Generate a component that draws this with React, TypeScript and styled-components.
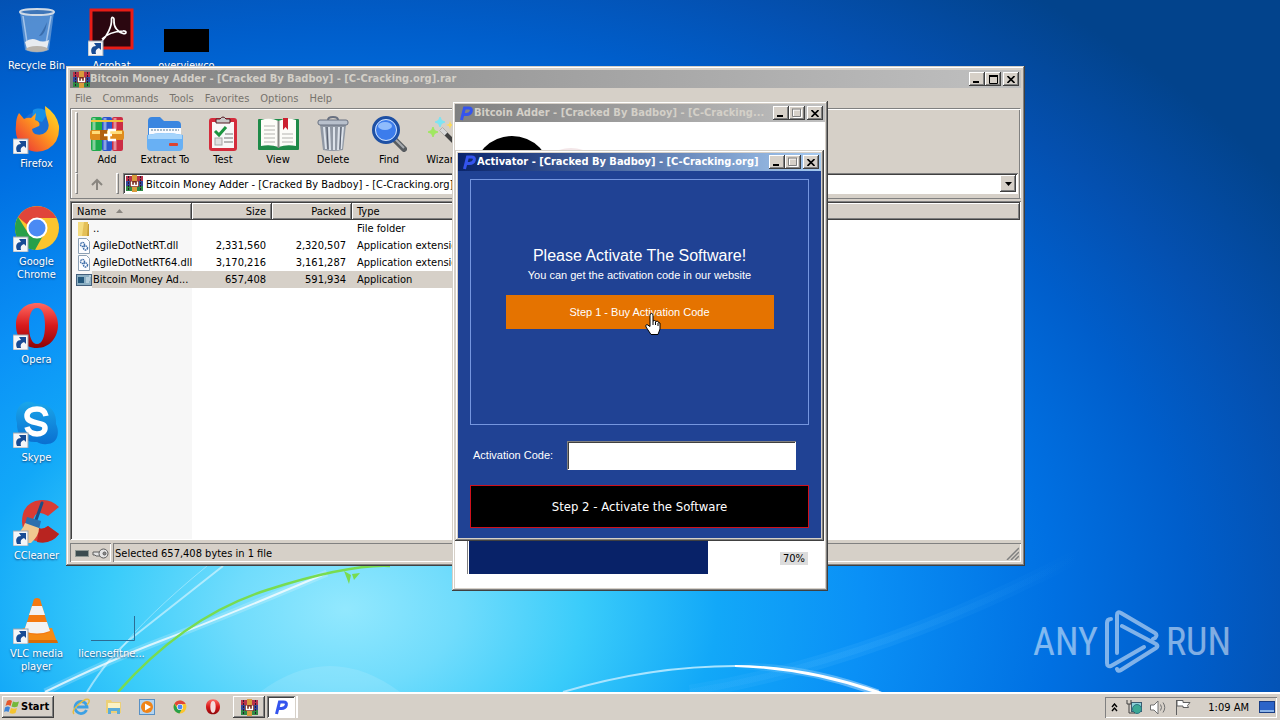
import React from 'react';
import styled, { createGlobalStyle, css } from 'styled-components';

const face = '#d6d0c8';
const ui = '"DejaVu Sans Condensed", "DejaVu Sans", sans-serif';
const formFont = '"Liberation Sans", Arial, sans-serif';

const GlobalStyle = createGlobalStyle`
  *, *::before, *::after { box-sizing: border-box; }
  body { margin: 0; overflow: hidden; font: 11px/13px ${ui}; color: #000; }
  button, input, select { font: inherit; color: inherit; border-radius: 0; }
  svg { display: block; flex: none; }
`;

const raised = css`
  box-shadow: inset -1px -1px #404040, inset 1px 1px #fff, inset -2px -2px #808080;
`;
const sunken = css`
  box-shadow: inset 1px 1px #808080, inset -1px -1px #fff, inset 2px 2px #404040;
`;
const thinSunken = css`
  box-shadow: inset 1px 1px #808080, inset -1px -1px #fff;
`;

const Screen = styled.div`
  display: flex;
  flex-direction: column;
  height: 100vh;
`;

const Desktop = styled.main`
  position: relative;
  flex: 1;
  min-height: 0;
  overflow: hidden;
  background: radial-gradient(88% 112% at 27% 88%, #92e8fe 0%, #70dcfc 10%, #3accfa 21%, #12a8f8 33%, #0a90f6 46%, #0070e2 63%, #005ecb 75%, #0450b0 86%, #02438c 100%);
`;

const Wallpaper = styled.svg`
  position: absolute;
  inset: 0;
  width: 100%;
  height: 100%;
`;

const IconGrid = styled.div`
  position: relative;
  display: grid;
  grid-template-columns: repeat(3, 75px);
  grid-auto-rows: 98px;
  width: max-content;
  padding-top: 8px;
  margin-left: -1px;
`;

const Shortcut = styled.a<{ $col: number; $row: number }>`
  grid-column: ${(p) => p.$col};
  grid-row: ${(p) => p.$row};
  display: flex;
  flex-direction: column;
  align-items: center;
  gap: 3px;
  overflow: hidden;
  color: #fff;
  text-align: center;
  text-decoration: none;
  text-shadow: 0 1px 2px #123a70;
`;

const ShortcutLabel = styled.span`
  max-width: 70px;
`;

const Window = styled.section`
  position: absolute;
  display: flex;
  flex-direction: column;
  padding: 4px;
  background: ${face};
  box-shadow: inset -1px -1px #404040, inset 1px 1px #d4d0c8, inset -2px -2px #808080, inset 2px 2px #fff;
`;

const ArchiverWindow = styled(Window)`
  left: 66px;
  right: 255px;
  top: 66px;
  bottom: 126px;
`;

const AdderWindow = styled(Window)`
  left: 452px;
  top: 101px;
  width: 376px;
  height: 490px;
  padding: 3px;
`;

const ActivatorWindow = styled(Window)`
  left: 455px;
  top: 150px;
  width: 369px;
  padding: 3px;
`;

const TitleBar = styled.header<{ $active?: boolean }>`
  display: flex;
  align-items: center;
  flex: none;
  height: 18px;
  padding: 0 2px 0 3px;
  color: ${(p) => (p.$active ? '#fff' : '#d4d0c8')};
  background: ${(p) => (p.$active ? 'linear-gradient(90deg, #0a246a, #a6caf0)' : 'linear-gradient(90deg, #808080, #c0c0c0)')};
`;

const Title = styled.h1`
  flex: 1;
  min-width: 0;
  margin: 0;
  overflow: hidden;
  font: bold 11px/14px ${ui};
  white-space: nowrap;
`;

const CaptionButton = styled.button`
  display: grid;
  place-items: center;
  width: 16px;
  height: 14px;
  padding: 0;
  border: 0;
  background: ${face};
  ${raised}
  & + &:last-child { margin-left: 2px; }
`;

const MenuBar = styled.nav`
  display: flex;
  flex: none;
  gap: 11px;
  height: 20px;
  padding: 4px 5px;
  color: #77736d;
`;

const MenuLink = styled.a`
  color: inherit;
  text-decoration: none;
`;

const Bars = styled.div`
  flex: none;
  border: 1px solid #808080;
  border-right-color: #fff;
  box-shadow: inset 1px 1px #fff, inset -1px 0 #808080;
  padding: 3px 2px 4px 4px;
`;

const Tools = styled.div`
  display: flex;
  height: 61px;
  overflow: hidden;
`;

const Grip = styled.span`
  flex: none;
  width: 3px;
  border: 1px solid #fff;
  border-right-color: #808080;
  border-bottom-color: #808080;
`;

const ToolButton = styled.button<{ $w: number }>`
  display: flex;
  flex: none;
  flex-direction: column;
  align-items: center;
  gap: 1px;
  width: ${(p) => p.$w}px;
  padding: 4px 0 0;
  border: 0;
  background: none;
  white-space: nowrap;
`;

const AddressRow = styled.div`
  display: flex;
  gap: 1px;
  height: 21px;
`;

const UpButton = styled.button`
  display: grid;
  place-items: center;
  width: 36px;
  padding: 0;
  border: 0;
  background: none;
`;

const Combo = styled.label`
  display: flex;
  flex: 1;
  align-items: center;
  min-width: 0;
  margin-left: 3px;
  padding: 2px 2px 2px 3px;
  background: #fff;
  ${sunken}
`;

const ComboSelect = styled.select`
  flex: 1;
  min-width: 0;
  padding: 1px 0 0 3px;
  border: 0;
  background: none;
  appearance: none;
`;

const ComboArrow = styled.span`
  display: grid;
  place-items: center;
  align-self: stretch;
  width: 16px;
  background: ${face};
  ${raised}
`;

const FileList = styled.div`
  flex: 1;
  min-height: 0;
  margin-top: 2px;
  padding: 2px 1px 1px 2px;
  overflow: hidden;
  background: linear-gradient(90deg, #f7f7f7 122px, #fff 122px);
  ${sunken}
`;

const Table = styled.table`
  width: 100%;
  table-layout: fixed;
  border-collapse: collapse;
  white-space: nowrap;
`;

const HeadCell = styled.th<{ $w?: number; $right?: boolean }>`
  width: ${(p) => (p.$w ? `${p.$w}px` : 'auto')};
  height: 17px;
  padding: 0 6px 0 5px;
  font-weight: normal;
  text-align: ${(p) => (p.$right ? 'right' : 'left')};
  background: ${face};
  ${raised}
`;

const SortMark = styled.svg`
  display: inline-block;
  margin: 0 0 2px 10px;
`;

const Cell = styled.td<{ $right?: boolean; $selected?: boolean }>`
  height: 17px;
  padding: 0 6px 0 5px;
  text-align: ${(p) => (p.$right ? 'right' : 'left')};
  background: ${(p) => (p.$selected ? face : 'none')};
`;

const NameCell = styled.td`
  height: 17px;
  padding: 0 0 0 4px;
`;

const FileName = styled.span<{ $selected?: boolean }>`
  display: flex;
  align-items: center;
  height: 17px;
  & > span {
    flex: 1;
    padding-left: 1px;
    line-height: 17px;
    background: ${(p) => (p.$selected ? face : 'none')};
  }
`;

const StatusBar = styled.footer`
  display: flex;
  flex: none;
  gap: 2px;
  height: 22px;
  padding-top: 3px;
`;

const StatusPane = styled.div<{ $grow?: boolean }>`
  display: flex;
  flex: ${(p) => (p.$grow ? 1 : 'none')};
  align-items: center;
  justify-content: space-between;
  gap: 3px;
  padding: 2px 2px 0 ${(p) => (p.$grow ? 2 : 5)}px;
  ${thinSunken}
`;

const AdderBody = styled.div`
  display: flex;
  flex: 1;
  flex-direction: column;
  justify-content: space-between;
  padding: 14px 17px 14px 12px;
  background: #fff;
`;

const ProgressRow = styled.div`
  display: flex;
  align-items: center;
  justify-content: space-between;
`;

const Track = styled.div`
  width: 246px;
  height: 40px;
  padding-left: 1px;
  border-left: 1px solid #808080;
`;

const Fill = styled.div`
  width: 98%;
  height: 100%;
  background: #082268;
`;

const Percent = styled.output`
  margin-top: 8px;
  padding: 0 3px;
  background: #dcdcdc;
`;

const ActivatorBody = styled.form`
  display: flex;
  flex-direction: column;
  padding: 8px 12px 10px;
  background: #204294;
  color: #fff;
  font-family: ${formFont};
`;

const Offer = styled.div`
  display: flex;
  flex-direction: column;
  align-items: center;
  height: 246px;
  padding-top: 66px;
  border: 1px solid #7596df;
`;

const OfferTitle = styled.h2`
  margin: 0;
  font: 16px/20px ${formFont};
`;

const OfferText = styled.p`
  margin: 3px 0 13px;
`;

const BuyButton = styled.button`
  width: 268px;
  height: 34px;
  border: 0;
  background: #e57300;
`;

const CodeRow = styled.div`
  display: flex;
  align-items: center;
  justify-content: space-between;
  padding: 16px 13px 15px 3px;
`;

const CodeInput = styled.input`
  width: 229px;
  height: 29px;
  padding: 0 6px;
  border: 0;
  background: #fff;
  color: #000;
  ${sunken}
`;

const ActivateButton = styled.button`
  height: 43px;
  border: 1px solid #d0101c;
  background: #000;
  font: 13px/16px ${ui};
`;

const Pointer = styled.svg`
  position: absolute;
  left: 645px;
  top: 313px;
`;

const Watermark = styled.div`
  position: absolute;
  right: 49px;
  bottom: 18px;
  display: flex;
  align-items: center;
  gap: 6px;
  color: #fff;
  opacity: 0.5;
  font: 400 38px/64px "Roboto Condensed", Lato, sans-serif;
`;

const Taskbar = styled.footer`
  display: flex;
  flex: none;
  align-items: center;
  height: 28px;
  padding: 2px 3px 0 2px;
  background: ${face};
  box-shadow: inset 0 2px #fff;
`;

const StartButton = styled.button`
  display: flex;
  align-items: center;
  gap: 1px;
  width: 52px;
  height: 22px;
  margin-right: 10px;
  padding: 0 3px 0 2px;
  border: 0;
  background: ${face};
  font: bold 11px/14px ${ui};
  ${raised}
`;

const QuickLaunch = styled.nav`
  display: flex;
  margin-right: 4px;
`;

const QuickLink = styled.a`
  display: grid;
  place-items: center;
  width: 33px;
`;

const TaskButton = styled.button<{ $pressed?: boolean }>`
  display: grid;
  place-items: center;
  width: ${(p) => (p.$pressed ? 28 : 32)}px;
  height: 22px;
  margin-right: 2px;
  padding: 0;
  border: 0;
  background: ${(p) => (p.$pressed ? '#fff' : face)};
  ${(p) => (p.$pressed ? sunken : raised)}
`;

const Divider = styled.span`
  width: 2px;
  height: 22px;
  margin-left: -1px;
  background: #fff;
`;

const Tray = styled.div`
  display: flex;
  align-items: center;
  gap: 8px;
  height: 21px;
  margin-left: auto;
  padding: 0 2px 0 6px;
  ${thinSunken}
`;

const Clock = styled.time`
  margin: 0 2px 0 9px;
`;

/* ---------- drawings ---------- */

const Badge = () => (
  <g>
    <rect x="0" y="33" width="15" height="15" fill="#f4f6f8" stroke="#9aa4b0" strokeWidth="1" />
    <path d="M4 46c-2-5 0-8 4-8l-2-3h7v7l-2-2c-3 1-4 3-3 6z" fill="#174b94" />
  </g>
);

const BinIcon = () => (
  <svg width="48" height="48" viewBox="0 0 48 48">
    <path d="M7 4h34l-5 38q-12 5-24 0z" fill="#6fa0d8" fillOpacity=".75" />
    <path d="M10 8l5 33M38 8l-6 33" stroke="#c8dcf4" strokeOpacity=".7" strokeWidth="1.500" />
    <path d="M34 14q-2 14-8 14 4-5 8-14z" fill="#2f5f9c" fillOpacity=".7" />
    <path d="M12 34q6-5 12-2t12 0l-2 9q-10 4-20 0z" fill="#e8ecf0" />
    <ellipse cx="24" cy="41" rx="11" ry="3" fill="#b9b4ac" />
    <ellipse cx="24" cy="4" rx="17" ry="3" fill="#3f76b8" stroke="#d0dae6" strokeWidth="2" />
  </svg>
);

const AcrobatIcon = () => (
  <svg width="48" height="48" viewBox="0 0 48 48">
    <rect x="3" y="2" width="41" height="38" fill="#2b0710" stroke="#e81c16" strokeWidth="3" />
    <path d="M14 33c5-5 10-15 9.500-21-.5-4 3-3 2.500 1-.5 6 4 11 9 12.500 4 1 4-3 0-2.500-8 .5-16 3-21 8" fill="none" stroke="#fff" strokeWidth="1.700" />
    <Badge />
  </svg>
);

const BlackIcon = () => (
  <svg width="48" height="48" viewBox="0 0 48 48">
    <rect x="1" y="21" width="45" height="23" fill="#000" />
  </svg>
);

const FirefoxIcon = () => (
  <svg width="48" height="48" viewBox="0 0 48 48">
    <defs>
      <linearGradient id="fx" x1="1" y1="0" x2="0" y2="1">
        <stop offset="0" stopColor="#ffe226" />
        <stop offset=".45" stopColor="#ff9a1e" />
        <stop offset="1" stopColor="#e8233c" />
      </linearGradient>
    </defs>
    <circle cx="25" cy="23" r="17" fill="#1b6fd6" />
    <path d="M20 4c6-3 12-1 15 3l-6 9-10-3z" fill="#1690e8" />
    <path d="M6 7l5 6q4-2 7-1l5-5-1 7q6 2 4 6l-7 3q0 3 3 5 7 2 11-2 4-4 2-10-3-9-3-16 12 8 14 20 1 16-11 23-12 6-23-1Q1 34 3 19q0-7 3-12z" fill="url(#fx)" />
    <Badge />
  </svg>
);

const chromeShapes = (
  <>
    <circle cx="24" cy="24" r="22" fill="#fbc52e" />
    <path d="M5 13A22 22 0 0 1 43.500 14H24a10 10 0 0 0-9.500 7z" fill="#e0453a" />
    <path d="M5 13a22 22 0 0 0 17 33l10-18a10 10 0 0 1-17 1z" fill="#27a04a" />
    <circle cx="24" cy="24" r="10.500" fill="#fff" />
    <circle cx="24" cy="24" r="8.500" fill="#4a8af4" />
  </>
);

const ChromeIcon = () => (
  <svg width="48" height="48" viewBox="0 0 48 48">
    {chromeShapes}
    <Badge />
  </svg>
);

const operaShapes = (
  <>
    <defs>
      <linearGradient id="op" x1="0" y1="0" x2="0" y2="1">
        <stop offset="0" stopColor="#ff6a62" />
        <stop offset=".5" stopColor="#d81a1c" />
        <stop offset="1" stopColor="#8c0408" />
      </linearGradient>
    </defs>
    <path fillRule="evenodd" d="M24 1c13 0 21 10 21 22S37 46 24 46 3 36 3 23 11 1 24 1zm0 5c-5 0-8 6-8 17.500S19 42 24 42s8-7 8-18.500S29 6 24 6z" fill="url(#op)" />
  </>
);

const OperaIcon = () => (
  <svg width="48" height="48" viewBox="0 0 48 48">
    {operaShapes}
    <Badge />
  </svg>
);

const SkypeIcon = () => (
  <svg width="48" height="48" viewBox="0 0 48 48">
    <defs>
      <linearGradient id="sk" x1="0" y1="0" x2="0" y2="1">
        <stop offset="0" stopColor="#1aa6ea" />
        <stop offset="1" stopColor="#0a6fd0" />
      </linearGradient>
    </defs>
    <path d="M13 2c5-1 8 1 10 2 14-1 21 8 20 20 4 8 2 20-9 20-4 1-8-1-10-2C11 43 3 34 4 23 1 14 5 4 13 2z" fill="url(#sk)" />
    <path d="M33 16c-1-5-4-7-9-7s-10 2-10 7c0 9 18 5 18 12 0 4-4 6-8 6-5 0-9-3-10-7" fill="none" stroke="#fff" strokeWidth="5.500" />
    <Badge />
  </svg>
);

const CCleanerIcon = () => (
  <svg width="48" height="48" viewBox="0 0 48 48">
    <path d="M46 9Q38 1 28 2 9 4 9 24q1 18 19 20 11 1 18-8l-11-8q-11 8-15-5 2-13 15-5z" fill="#d83c34" />
    <path d="M46 36l-11-8q-5 4-9 2l-2 14q14 3 22-8z" fill="#b82420" />
    <path d="M29 5l-6 17" stroke="#1c4f84" strokeWidth="3" strokeLinecap="round" />
    <path d="M14 19l14 4-2 8-14-5z" fill="#2c6fae" />
    <path d="M12 25l14 5q0 8-8 15H4l-3-8q8-3 11-12z" fill="#f0c890" />
    <Badge />
  </svg>
);

const VlcIcon = () => (
  <svg width="48" height="48" viewBox="0 0 48 48">
    <path d="M10 32h29l5 14H8z" fill="#f58a14" />
    <path d="M8 44h36l1 3H8z" fill="#d86c08" />
    <path d="M21 3q3-2 6 0l10 33q-13 6-26 0z" fill="#f47a10" />
    <path d="M19 10h10l3 9H16zM14 26h20l3 9q-13 5-26 0z" fill="#f2f2f2" />
    <Badge />
  </svg>
);

const BlankIcon = () => (
  <svg width="48" height="48" viewBox="0 0 48 48">
    <path d="M3 44.500h43.500V20" fill="none" stroke="#2c6c94" />
  </svg>
);

const RarIcon = () => (
  <svg width="17" height="17" viewBox="0 0 17 17">
    <rect x="0" y="1" width="17" height="5" fill="#b8324a" />
    <rect x="0" y="6" width="17" height="5" fill="#34489c" />
    <rect x="0" y="11" width="17" height="5" fill="#2e8a44" />
    <path d="M2.500 1v15M14.500 1v15" stroke="#2a1830" strokeDasharray="2 1" />
    <rect x="6" y="0" width="5" height="17" fill="#d89c3c" />
    <rect x="4" y="6" width="9" height="6" fill="#7a2c20" />
    <path d="M5.500 6.500v4h3v-3M8.500 10.500h3v-4" fill="none" stroke="#fff" strokeWidth="1.400" />
  </svg>
);

const PIcon = () => (
  <svg width="16" height="16" viewBox="0 0 16 16">
    <path d="M3.500 15L6.500 3h4q3.500 0 2.800 3.200-.8 3.300-4.800 3.300H5.500" fill="none" stroke="#3454ee" strokeWidth="3" />
  </svg>
);

const AddIcon = () => (
  <svg width="36" height="36" viewBox="0 0 36 36">
    <rect x="2" y="1" width="11" height="34" rx="2" fill="#1faa4c" />
    <rect x="13" y="1" width="10" height="34" rx="2" fill="#2a56cc" />
    <rect x="23" y="1" width="11" height="34" rx="2" fill="#cc2c44" />
    <path d="M5 2v32M16 2v32M26 2v32" stroke="#fff" strokeOpacity=".45" strokeWidth="3" />
    <path d="M2 5h11M13 5h10M23 5h11" stroke="#f0c43c" strokeWidth="2" />
    <rect x="1" y="14" width="34" height="10" rx="2" fill="#e08c1c" />
    <path d="M3 16.500h30" stroke="#ffdc78" strokeWidth="3" />
    <rect x="11" y="14" width="7" height="10" fill="#b06014" />
    <path d="M27 14h-7v10h7M15 19h8" stroke="#fff" strokeWidth="2.500" fill="none" />
  </svg>
);

const ExtractIcon = () => (
  <svg width="36" height="36" viewBox="0 0 36 36">
    <path d="M1 5q0-4 4-4h8l4 4h13q4 0 4 4v12H1z" fill="#3a86e0" />
    <path d="M2 12h32v10H2z" fill="#f8fbff" />
    <path d="M4 14h28" stroke="#a8bccc" strokeWidth="2" strokeDasharray="2 1" />
    <path d="M0 19q18-4 36 0v12q0 4-4 4H4q-4 0-4-4z" fill="#68b0f4" />
    <path d="M1 19q17-4 34 0v4H1z" fill="#a4d4fc" />
    <rect x="22" y="27" width="9" height="3" rx="1" fill="#dc4430" />
  </svg>
);

const TestIcon = () => (
  <svg width="36" height="36" viewBox="0 0 36 36">
    <rect x="4" y="2" width="28" height="33" rx="3" fill="#d42c3c" />
    <rect x="7" y="6" width="22" height="26" fill="#f8f8f8" />
    <path d="M11 7V3h4q3-4 6 0h4v4z" fill="#c8c8c8" stroke="#501820" />
    <path d="M10 15l4 4 7-8" fill="none" stroke="#1c9440" strokeWidth="3" />
    <path d="M20 18h8M19 22h9M19 26h9" stroke="#a0a0a0" strokeWidth="1.500" />
    <rect x="10" y="22" width="7" height="7" fill="#e0e0e0" stroke="#a8a8a8" />
  </svg>
);

const ViewIcon = () => (
  <svg width="43" height="36" viewBox="0 0 43 36">
    <rect x="1" y="3" width="41" height="31" rx="1" fill="#1e8a48" />
    <path d="M4 4q9-3 17.500 1Q30 1 39 4v26q-9-2-17.500 1Q13 28 4 30z" fill="#fcfcf8" />
    <path d="M21.500 5v27" stroke="#8c8c88" strokeWidth="2" />
    <path d="M7 10h11M7 14h11M7 18h11M7 22h11M7 26h11M25 18h11M25 22h11M25 26h11" stroke="#b4b4b0" />
    <path d="M26 2h5v12l-2.500-3-2.500 3z" fill="#cc2030" />
  </svg>
);

const DeleteIcon = () => (
  <svg width="36" height="36" viewBox="0 0 36 36">
    <path d="M5 9h26l-3 25q-10 2-20 0z" fill="#9098a4" />
    <path d="M9 11l2 22M14 11l1 23M19 11v23M24 11l-1 23M28 11l-2 22" stroke="#dce2ea" strokeWidth="2" />
    <path d="M12 11l1 22M26 11l-1 22" stroke="#586070" />
    <rect x="3" y="4" width="30" height="5" rx="2" fill="#b8c0cc" stroke="#687080" />
    <path d="M13 4q0-3 5-3t5 3" fill="none" stroke="#687080" strokeWidth="2" />
  </svg>
);

const FindIcon = () => (
  <svg width="36" height="36" viewBox="0 0 36 36">
    <path d="M24 24l9 9" stroke="#585c60" strokeWidth="6" strokeLinecap="round" />
    <path d="M24 23l9 9" stroke="#a8acb0" strokeWidth="2" />
    <circle cx="15" cy="14" r="12.500" fill="#3c7cec" stroke="#1e50a4" strokeWidth="3" />
    <circle cx="15" cy="14" r="10.500" fill="none" stroke="#d4e4f8" strokeWidth="1" />
    <ellipse cx="14" cy="10" rx="7" ry="4" fill="#90bcfc" />
  </svg>
);

const WizardIcon = () => (
  <svg width="36" height="36" viewBox="0 0 36 36">
    <path d="M16 13l18 18" stroke="#404040" strokeWidth="4" />
    <path d="M16 13l5 5" stroke="#d8d8d8" strokeWidth="4" />
    <path d="M15 1l1.500 3.500L20 6l-3.500 1.500L15 11l-1.500-3.500L10 6l3.500-1.500z" fill="#7ce4f4" stroke="#7ce4f4" />
    <path d="M8 11l1.500 3.500L13 16l-3.500 1.500L8 21l-1.500-3.500L3 16l3.500-1.500z" fill="#a0e860" stroke="#a0e860" />
    <path d="M25 5l1 3 3 1-3 1-1 3-1-3-3-1 3-1z" fill="#fcdc5c" />
  </svg>
);

const FolderIcon = () => (
  <svg width="16" height="16" viewBox="0 0 16 16">
    <path d="M2 1h6v14H2z" fill="#f4dc80" />
    <path d="M8 1h4v14H6z" fill="#e4c058" />
    <path d="M12 3h1v12h-2z" fill="#c49c38" />
  </svg>
);

const DllIcon = () => (
  <svg width="16" height="16" viewBox="0 0 16 16">
    <path d="M2.500.5h8l3 3v12h-11z" fill="#fcfdff" stroke="#8ca0b4" />
    <circle cx="6.500" cy="6.500" r="2" fill="none" stroke="#3c6ca8" strokeDasharray="1.500 .6" strokeWidth="1.500" />
    <circle cx="9.500" cy="10" r="2" fill="none" stroke="#3c6ca8" strokeDasharray="1.500 .6" strokeWidth="1.500" />
  </svg>
);

const ExeIcon = () => (
  <svg width="16" height="16" viewBox="0 0 16 16">
    <rect x=".5" y="2.500" width="15" height="11" fill="#8cb0c4" stroke="#44607c" />
    <rect x="2" y="5" width="6" height="6" fill="#24587c" />
    <path d="M10 6h4M10 8h4M10 10h3M13 4h2" stroke="#dcecf4" />
  </svg>
);

const PlayMark = () => (
  <svg width="56" height="64" viewBox="0 0 56 64" fill="none" stroke="currentColor" strokeWidth="4" strokeLinejoin="round" strokeLinecap="round">
    <path d="M7 9q-4 0-4 4v40q0 4 4 3l33-19" />
    <path d="M13 43V5q0-4 4-2l34 20q3 2 0 5l-2 1" />
    <path d="M18 16l34 18q3 2 0 4L17 60q-3 2-4-1" />
  </svg>
);

const CloseGlyph = () => (
  <svg width="8" height="7"><path d="M.5 0l7 7M7.500 0l-7 7" stroke="#000" strokeWidth="1.600" /></svg>
);

const Captions = ({ fixedSize }: { fixedSize?: boolean }) => (
  <>
    <CaptionButton aria-label="Minimize">
      <svg width="8" height="8"><path d="M0 7h6" stroke="#000" strokeWidth="2" /></svg>
    </CaptionButton>
    <CaptionButton aria-label="Maximize" disabled={fixedSize}>
      {fixedSize ? (
        <svg width="10" height="10"><path d="M1.500 2v7.500h8V2M1 2h9" fill="none" stroke="#fff" /><path d="M.5 1v7.500h8V1M0 1h9" fill="none" stroke="#808080" /></svg>
      ) : (
        <svg width="9" height="9"><path d="M.5 1v7.500h8V1" fill="none" stroke="#000" /><path d="M0 1h9" stroke="#000" strokeWidth="2" /></svg>
      )}
    </CaptionButton>
    <CaptionButton aria-label="Close">
      <CloseGlyph />
    </CaptionButton>
  </>
);

/* ---------- data ---------- */

const shortcuts = [
  { label: 'Recycle Bin', Icon: BinIcon, col: 1, row: 1 },
  { label: 'Firefox', Icon: FirefoxIcon, col: 1, row: 2 },
  { label: 'Google Chrome', Icon: ChromeIcon, col: 1, row: 3 },
  { label: 'Opera', Icon: OperaIcon, col: 1, row: 4 },
  { label: 'Skype', Icon: SkypeIcon, col: 1, row: 5 },
  { label: 'CCleaner', Icon: CCleanerIcon, col: 1, row: 6 },
  { label: 'VLC media player', Icon: VlcIcon, col: 1, row: 7 },
  { label: 'Acrobat', Icon: AcrobatIcon, col: 2, row: 1 },
  { label: 'licensefitne...', Icon: BlankIcon, col: 2, row: 7 },
  { label: 'overviewco', Icon: BlackIcon, col: 3, row: 1 },
];

const tools = [
  { label: 'Add', Icon: AddIcon, w: 58 },
  { label: 'Extract To', Icon: ExtractIcon, w: 58 },
  { label: 'Test', Icon: TestIcon, w: 58 },
  { label: 'View', Icon: ViewIcon, w: 52 },
  { label: 'Delete', Icon: DeleteIcon, w: 58 },
  { label: 'Find', Icon: FindIcon, w: 54 },
  { label: 'Wizard', Icon: WizardIcon, w: 54 },
];

const files = [
  { name: '..', size: '', packed: '', type: 'File folder', Icon: FolderIcon },
  { name: 'AgileDotNetRT.dll', size: '2,331,560', packed: '2,320,507', type: 'Application extension', Icon: DllIcon },
  { name: 'AgileDotNetRT64.dll', size: '3,170,216', packed: '3,161,287', type: 'Application extension', Icon: DllIcon },
  { name: 'Bitcoin Money Ad...', size: '657,408', packed: '591,934', type: 'Application', Icon: ExeIcon, selected: true },
];

const archive = 'Bitcoin Money Adder - [Cracked By Badboy] - [C-Cracking.org].rar';

export default function App() {
  return (
    <Screen>
      <GlobalStyle />
      <Desktop>
        <Wallpaper viewBox="0 0 1280 692" preserveAspectRatio="none" aria-hidden="true" fill="none">
          <defs>
            <linearGradient id="flare" gradientUnits="userSpaceOnUse" x1="735" y1="0" x2="880" y2="0">
              <stop offset="0" stopColor="#fff" stopOpacity="0" />
              <stop offset="1" stopColor="#fff" stopOpacity=".45" />
            </linearGradient>
            <linearGradient id="beam" gradientUnits="userSpaceOnUse" x1="690" y1="0" x2="1080" y2="0">
              <stop offset="0" stopColor="#5cc0ff" stopOpacity=".1" />
              <stop offset=".4" stopColor="#5cc0ff" stopOpacity=".14" />
              <stop offset="1" stopColor="#5cc0ff" stopOpacity="0" />
            </linearGradient>
          </defs>
          <path d="M260 692Q330 640 400 692z" fill="#fff" fillOpacity=".12" />
          <path d="M45 692Q110 660 163 640T327 573" stroke="#fff" strokeOpacity=".2" strokeWidth="7" />
          <path d="M45 692Q110 660 163 640T327 573" stroke="#fff" strokeOpacity=".75" strokeWidth="2" />
          <path d="M87 692Q110 655 133 637T223 566" stroke="#fff" strokeOpacity=".5" strokeWidth="2" />
          <path d="M120 650Q145 617 207 566" stroke="#fff" strokeOpacity=".35" />
          <path d="M118 692Q185 616 267 590T390 566" stroke="#78dc50" strokeWidth="2.500" />
          <path d="M344 571l5 13 2-9zM352 574l8-1-6 7z" fill="#78dc50" />
          <path d="M690 692Q880 660 1080 555" stroke="url(#beam)" strokeWidth="14" />
          <path d="M690 692Q880 660 1080 555" stroke="url(#beam)" strokeWidth="6" />
          <path d="M563 692Q650 666 736 666" stroke="#a8e4ff" strokeWidth="2" />
          <path d="M735 666Q805 666 878 693" stroke="url(#flare)" strokeWidth="7" />
          <path d="M735 665Q805 665 882 692h-10Q805 669 735 667z" fill="#fff" />
        </Wallpaper>

        <IconGrid>
          {shortcuts.map(({ label, Icon, col, row }) => (
            <Shortcut key={label} href="#" $col={col} $row={row}>
              <Icon />
              <ShortcutLabel>{label}</ShortcutLabel>
            </Shortcut>
          ))}
        </IconGrid>

        <Watermark>
          <span>ANY</span>
          <PlayMark />
          <span>RUN</span>
        </Watermark>

        <ArchiverWindow>
          <TitleBar>
            <RarIcon />
            <Title>{archive}</Title>
            <Captions />
          </TitleBar>
          <MenuBar>
            {['File', 'Commands', 'Tools', 'Favorites', 'Options', 'Help'].map((m) => (
              <MenuLink key={m} href="#">{m}</MenuLink>
            ))}
          </MenuBar>
          <Bars>
            <Tools>
              <Grip />
              {tools.map(({ label, Icon, w }) => (
                <ToolButton key={label} $w={w}>
                  <Icon />
                  {label}
                </ToolButton>
              ))}
            </Tools>
            <AddressRow>
              <Grip />
              <UpButton aria-label="Up one level">
                <svg width="12" height="12" fill="none" stroke="#8a8680" strokeWidth="2"><path d="M6 12V2M1 7l5-5 5 5" /></svg>
              </UpButton>
              <Grip />
              <Combo>
                <RarIcon />
                <ComboSelect aria-label="Archive path" defaultValue={archive}>
                  <option>{archive}</option>
                </ComboSelect>
                <ComboArrow>
                  <svg width="7" height="4"><path d="M0 0h7L3.500 4z" /></svg>
                </ComboArrow>
              </Combo>
            </AddressRow>
          </Bars>
          <FileList>
            <Table>
              <thead>
                <tr>
                  <HeadCell $w={120}>
                    Name
                    <SortMark width="7" height="4"><path d="M0 4h7L3.500 0z" fill="#8a8680" /></SortMark>
                  </HeadCell>
                  <HeadCell $w={80} $right>Size</HeadCell>
                  <HeadCell $w={80} $right>Packed</HeadCell>
                  <HeadCell $w={140}>Type</HeadCell>
                  <HeadCell />
                </tr>
              </thead>
              <tbody>
                {files.map(({ name, size, packed, type, Icon, selected }) => (
                  <tr key={name}>
                    <NameCell>
                      <FileName $selected={selected}>
                        <Icon />
                        <span>{name}</span>
                      </FileName>
                    </NameCell>
                    <Cell $right $selected={selected}>{size}</Cell>
                    <Cell $right $selected={selected}>{packed}</Cell>
                    <Cell $selected={selected}>{type}</Cell>
                  </tr>
                ))}
              </tbody>
            </Table>
          </FileList>
          <StatusBar>
            <StatusPane>
              <svg width="14" height="7"><rect x=".5" y=".5" width="13" height="6" fill="#3c4c50" stroke="#909894" /></svg>
              <svg width="17" height="11" fill="#e4e4e4" stroke="#5c5c5c"><path d="M9 4H1v3h2l1 1h5" /><circle cx="11.500" cy="5.500" r="4.500" /><circle cx="12.500" cy="5.500" r="1.500" fill="#888" /></svg>
            </StatusPane>
            <StatusPane $grow>
              Selected 657,408 bytes in 1 file
              <svg width="13" height="13" stroke="#808080"><path d="M1 13L13 1M5 13l8-8M9 13l4-4" strokeWidth="1.500" /></svg>
            </StatusPane>
          </StatusBar>
        </ArchiverWindow>

        <AdderWindow>
          <TitleBar>
            <PIcon />
            <Title>Bitcoin Adder - [Cracked By Badboy] - [C-Cracking...</Title>
            <Captions fixedSize />
          </TitleBar>
          <AdderBody>
            <svg width="120" height="78">
              <circle cx="45" cy="39" r="39" fill="#000" />
              <path d="M92 14q12-4 24 0z" fill="#f3e6e8" />
            </svg>
            <ProgressRow>
              <Track><Fill /></Track>
              <Percent>70%</Percent>
            </ProgressRow>
          </AdderBody>
        </AdderWindow>

        <ActivatorWindow>
          <TitleBar $active>
            <PIcon />
            <Title>Activator - [Cracked By Badboy] - [C-Cracking.org]</Title>
            <Captions fixedSize />
          </TitleBar>
          <ActivatorBody>
            <Offer>
              <OfferTitle>Please Activate The Software!</OfferTitle>
              <OfferText>You can get the activation code in our website</OfferText>
              <BuyButton type="button">Step 1 - Buy Activation Code</BuyButton>
            </Offer>
            <CodeRow>
              <label htmlFor="code">Activation Code:</label>
              <CodeInput id="code" type="text" />
            </CodeRow>
            <ActivateButton type="button">Step 2 - Activate the Software</ActivateButton>
          </ActivatorBody>
        </ActivatorWindow>

        <Pointer width="17" height="23" viewBox="0 0 17 23" aria-hidden="true">
          <path d="M5 2q0-1.500 1.500-1.500T8 2v6l1.500-.5 1.500 1 1.500-.5 1 1.500 1.500.5v6l-2 5.500H6L1 14q-1-2 1-2.500l3 2z" fill="#fff" stroke="#000" />
          <path d="M8 8v4M10.500 9v3M13 10v3" stroke="#000" />
        </Pointer>
      </Desktop>

      <Taskbar>
        <StartButton>
          <svg width="16" height="16" viewBox="0 0 16 16">
            <path d="M3 2q3-2 5 0L6.500 7Q4 5 1.500 7z" fill="#e4582c" />
            <path d="M9 2.500q3 1.500 6 0L13.500 7.500q-3 1.500-6 0z" fill="#74b83c" />
            <path d="M1 8.500q3-2 5 0L4.500 13Q2 11.500 0 13z" fill="#3c84d8" />
            <path d="M7 9q3 1.500 6 0l-1.500 5q-3 1.500-6 0z" fill="#f4c430" />
          </svg>
          Start
        </StartButton>
        <QuickLaunch>
          <QuickLink href="#" aria-label="Internet Explorer">
            <svg width="18" height="18" viewBox="0 0 18 18" fill="none">
              <path d="M14.500 12A6 6 0 1 1 15 9H5" stroke="#3ca0e4" strokeWidth="2.800" />
              <path d="M2 16Q-1 13 7 6t10-4q1 2-2 5" stroke="#e8bc3c" strokeWidth="1.400" />
            </svg>
          </QuickLink>
          <QuickLink href="#" aria-label="File Explorer">
            <svg width="18" height="16" viewBox="0 0 18 16">
              <path d="M1 1h5l1 2h9v11H1z" fill="#ecd078" />
              <path d="M3 4h12v5H3z" fill="#fbf2c4" />
              <path d="M3 15V9h12v6h-3v-3H6v3z" fill="#5cacd8" />
            </svg>
          </QuickLink>
          <QuickLink href="#" aria-label="Media Player">
            <svg width="16" height="16" viewBox="0 0 16 16">
              <rect x=".5" y=".5" width="15" height="15" fill="#b4d4f0" stroke="#5890c4" />
              <circle cx="8" cy="8" r="6" fill="#f08418" />
              <path d="M6 4.500v7L12 8z" fill="#fff" />
            </svg>
          </QuickLink>
          <QuickLink href="#" aria-label="Chrome">
            <svg width="14" height="14" viewBox="0 0 48 48">{chromeShapes}</svg>
          </QuickLink>
          <QuickLink href="#" aria-label="Opera">
            <svg width="16" height="16" viewBox="0 0 48 48"><circle cx="24" cy="24" r="18" fill="#f4dcdc" />{operaShapes}</svg>
          </QuickLink>
        </QuickLaunch>
        <TaskButton aria-label="WinRAR"><RarIcon /></TaskButton>
        <TaskButton $pressed aria-label="Bitcoin Adder"><PIcon /></TaskButton>
        <Divider />
        <Tray>
          <svg width="7" height="9" fill="none" stroke="#000" strokeWidth="1.400"><path d="M1 4l2.500-3L6 4M1 8l2.500-3L6 8" /></svg>
          <svg width="16" height="16" viewBox="0 0 16 16">
            <rect x="5.500" y="3.500" width="10" height="9" fill="#8cd0d8" stroke="#3c5c70" />
            <circle cx="11" cy="10" r="4.500" fill="#3ca894" stroke="#2c7484" />
            <path d="M1 1v4h4V1M3 5v9h6" fill="none" stroke="#404040" />
          </svg>
          <svg width="17" height="15" viewBox="0 0 17 15" fill="#fff" stroke="#707070">
            <path d="M.5 5v5H4l4 4V1L4 5z" />
            <path d="M10.500 4.500q2 3 0 6M13 2.500q3.500 5 0 10" fill="none" />
          </svg>
          <svg width="16" height="16" viewBox="0 0 16 16" fill="#fff" stroke="#606060">
            <path d="M1.500 1v15M2 1.500h6v2h7l-2.500 3 1 2H8V7H2z" />
          </svg>
          <Clock>1:09 AM</Clock>
          <svg width="16" height="12" viewBox="0 0 16 12"><rect x=".5" y=".5" width="15" height="11" fill="#2c64c8" stroke="#183c84" /><path d="M1 9h14v2H1z" fill="#8cb4e8" /></svg>
        </Tray>
      </Taskbar>
    </Screen>
  );
}
